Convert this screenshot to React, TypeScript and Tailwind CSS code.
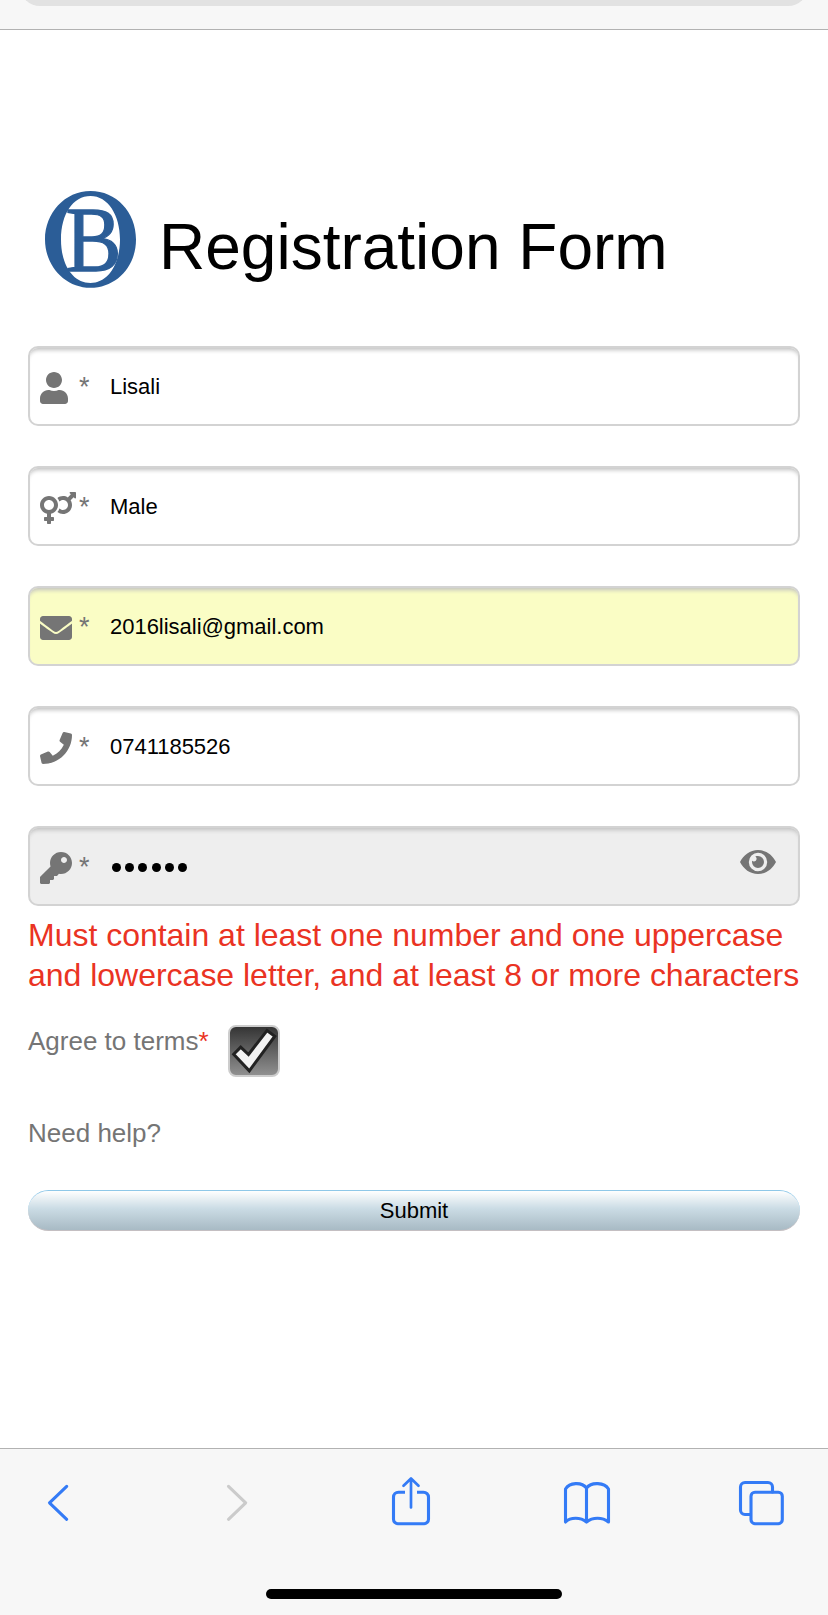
import type { ReactNode } from 'react';
import { FaUser, FaVenusMars, FaEnvelope, FaPhone, FaKey } from 'react-icons/fa';

const Logo = () => (
  <svg className="h-[98px] w-[92px] shrink-0 overflow-visible" viewBox="0 0 92 98" aria-hidden="true">
    <path
      fill="#2b5d97"
      fillRule="evenodd"
      d="M45.5 1C71 1 91 22 91 49.500S71 97.800 45.500 97.800 0 76 0 49.500 20 1 45.500 1ZM45.500 6C28 6 16 24 16 49.500S28 93 45.500 93 75 74 75 49.500 63 6 45.500 6Z"
    />
    <text x="20.500" y="81" fontSize="94" fontFamily="Liberation Serif, serif" fill="#2b5d97" stroke="#2b5d97" strokeWidth="1.300" textLength="56" lengthAdjust="spacingAndGlyphs">
      B
    </text>
  </svg>
);

const EyeIcon = () => (
  <svg className="h-6 w-9" viewBox="0 0 36 24" aria-hidden="true">
    <path
      fill="#757575"
      fillRule="evenodd"
      d="M18 0C10 0 3.500 5 0 12c3.500 7 10 12 18 12s14.500-5 18-12C32.500 5 26 0 18 0Zm0 2.800a9.200 9.200 0 1 1 0 18.400 9.200 9.200 0 0 1 0-18.400Z"
    />
    <path fill="#757575" d="M18 6a6 6 0 1 1-6 6c0-.4 0-.8.1-1.200.5.4 1.100.6 1.800.6 1.500 0 2.700-1.200 2.700-2.700 0-1-.5-1.900-1.300-2.300.8-.3 1.700-.4 2.700-.4Z" />
  </svg>
);

const CheckBox = () => (
  <svg className="ml-[19px] h-[52px] w-[52px] shrink-0" viewBox="0 0 52 52" aria-hidden="true">
    <defs>
      <linearGradient id="box" x1="0" y1="0" x2="0" y2="1">
        <stop offset="0" stopColor="#333" />
        <stop offset="1" stopColor="#929292" />
      </linearGradient>
    </defs>
    <rect x="1" y="1" width="50" height="50" rx="7" fill="url(#box)" stroke="#cdcdcd" strokeWidth="2" />
    <path d="M39 5.500 46.800 11.200 21.300 45.800 5.700 29.200 12.700 22.200 20.500 29.500Z" fill="#f2f2f2" stroke="#222" strokeWidth="3" />
  </svg>
);

type FieldProps = { icon: ReactNode; className: string; value: ReactNode; trailing?: ReactNode };

const Field = ({ icon, className, value, trailing }: FieldProps) => (
  <div className={`flex h-20 items-center rounded-[10px] border-2 border-[#d3d3d3] pr-[22px] pl-[10px] shadow-[inset_0_5px_4px_-3px_#c0c0c0] ${className}`}>
    <span className="flex w-9 shrink-0 items-center pt-[3px] text-[#757575]">{icon}</span>
    <span className="ml-[3px] w-[31px] pt-0.5 text-[27px] leading-8 text-[#757575]">*</span>
    <span className="grow pt-0.5 text-[22px] leading-7 tracking-[-0.02px]">{value}</span>
    {trailing}
  </div>
);

const Dots = () => (
  <span className="flex gap-1 pt-px pl-0.5">
    {[0, 1, 2, 3, 4, 5].map((i) => (
      <i key={i} className="mr-[0.2px] h-[9px] w-[9px] rounded-full bg-black" />
    ))}
  </span>
);

const Toolbar = () => (
  <footer className="flex h-[167px] flex-col items-center border-t border-[#b2b2b2] bg-[#f7f7f7]">
    <div className="h-[140px] w-full">
      <svg className="h-[100px] w-full" viewBox="0 0 828 100" fill="none" stroke="#347bf6" strokeWidth="3.100" strokeLinecap="round" strokeLinejoin="round" aria-hidden="true">
        <path d="M66.700 37.300 49.500 53.800 66.700 70.300" />
        <path stroke="#cbcbcb" d="M228.500 37.300 245.700 53.800 228.500 70.300" />
        <path strokeLinecap="butt" d="M405 43.200h-6.500a5 5 0 0 0-5 5v22a4.500 4.500 0 0 0 4.500 4.500h26a4.500 4.500 0 0 0 4.500-4.500V48.200a5 5 0 0 0-5-5H417" />
        <path strokeWidth="2.700" d="M411 58.500V30M403.500 36.800l7.500-7.300 7.500 7.300" />
        <path d="M586.500 39v34c-6-5-16-5-21 0V40c4-6.500 16-7.500 21-1 5-6.500 18-5.500 22 1v33c-6-5-16-5-22 0" />
        <path d="M750 65.500h-5a4.500 4.500 0 0 1-4.500-4.500V38a4.500 4.500 0 0 1 4.500-4.500h23a4.500 4.500 0 0 1 4.500 4.500v5" />
        <rect x="751" y="43.200" width="31.300" height="31.500" rx="4" />
      </svg>
    </div>
    <div className="h-[10px] w-[296px] rounded-full bg-black" />
  </footer>
);

export default function App() {
  return (
    <div className="flex h-[1615px] w-[828px] flex-col overflow-hidden bg-white font-['Liberation_Sans',Arial,sans-serif] text-black">
      <header className="h-[30px] border-b border-[#b2b2b2] bg-[#f7f7f7] px-[20px]">
        <div className="h-[6px] overflow-hidden">
          <div className="-mt-10 h-[46px] rounded-[20px] bg-[#e2e2e2]" />
        </div>
      </header>
      <main className="grow px-7 pt-[160px]">
        <h1 className="flex h-[156px] pl-[17px] text-[64px] leading-[72px]">
          <Logo />
          <span className="ml-[22px] pt-[21px] whitespace-nowrap">Registration Form</span>
        </h1>
        <div className="flex flex-col gap-10">
          <Field icon={<FaUser size={32} className="-ml-0.5" />} className="bg-white" value="Lisali" />
          <Field icon={<FaVenusMars className="h-8 w-9" />} className="bg-white" value="Male" />
          <Field icon={<FaEnvelope size={32} />} className="bg-[#fafdc5]" value="2016lisali@gmail.com" />
          <Field icon={<FaPhone size={32} />} className="bg-white" value="0741185526" />
          <Field
            icon={<FaKey size={32} />}
            className="bg-[#eee]"
            value={<Dots />}
            trailing={<span className="pb-2"><EyeIcon /></span>}
          />
        </div>
        <p className="mt-[9px] text-[32px] leading-10 tracking-[-0.015px] whitespace-nowrap text-[#ea3323]">
          Must contain at least one number and one uppercase
          <br />
          and lowercase letter, and at least 8 or more characters
        </p>
        <div className="mt-[30px] flex h-[52px] text-[26px] leading-8 text-[#757575]">
          <span className="whitespace-nowrap">
            Agree to terms<span className="text-[#ea3323]">*</span>
          </span>
          <CheckBox />
        </div>
        <p className="mt-10 text-[26px] leading-8 text-[#757575]">Need help?</p>
        <button className="mt-[41px] block h-[41px] w-full rounded-full border-t border-b border-t-[#8fc8e8] border-b-[#c4bfc2] bg-linear-to-b from-white via-[#cbdce5] via-45% to-[#a8bac4] text-[22px] leading-7">
          Submit
        </button>
      </main>
      <Toolbar />
    </div>
  );
}
